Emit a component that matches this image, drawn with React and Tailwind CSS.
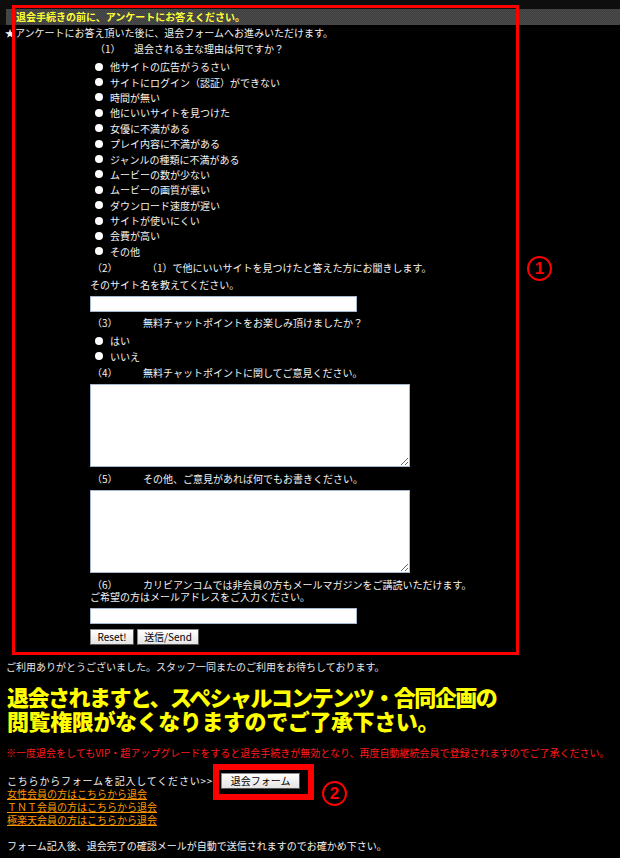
import React from 'react';

const riyu = [
  '他サイトの広告がうるさい',
  'サイトにログイン（認証）ができない',
  '時間が無い',
  '他にいいサイトを見つけた',
  '女優に不満がある',
  'プレイ内容に不満がある',
  'ジャンルの種類に不満がある',
  'ムービーの数が少ない',
  'ムービーの画質が悪い',
  'ダウンロード速度が遅い',
  'サイトが使いにくい',
  '会費が高い',
  'その他'
];

const links = [
  '女性会員の方はこちらから退会',
  'ＴＮＴ会員の方はこちらから退会',
  '極楽天会員の方はこちらから退会'
];

const font = 'font-["Noto_Sans_CJK_JP","Liberation_Sans",sans-serif]';

const Radio = ({ label }) => (
  <div className="flex items-center h-[15.4px]">
    <span className="w-[8px] h-[8px] rounded-full bg-white ml-[95px] mr-[7px]" />
    <span>{label}</span>
  </div>
);

const Pergunta = ({ num, left = 'pl-[92px]', gap = 'w-[51px]', children }) => (
  <div className={`flex items-center h-[12px] leading-[12px] ${left}`}>
    <span className={gap}>{num}</span>
    <span>{children}</span>
  </div>
);

const Botao = ({ children, w }) => (
  <button
    type="button"
    className={`h-[16px] ${w} border border-[#8a8a8a] border-b-[#555] border-r-[#555] bg-gradient-to-b from-[#ffffff] to-[#e4e4e4] text-[10px] leading-[14px] text-black`}
  >
    {children}
  </button>
);

const Circulo = ({ n, pos }) => (
  <div
    className={`absolute ${pos} w-[25px] h-[25px] rounded-full border-2 border-[#ff0000] flex items-center justify-center text-[#ff0000] text-[17px] font-bold leading-none font-["Liberation_Sans",sans-serif]`}
  >
    {n}
  </div>
);

const Desistencia = () => {
  return (
    <div className={`relative w-[620px] min-h-[858px] bg-black text-[#f2f2f2] text-[10px] ${font}`}>
      <div className="bg-[#0e0e0e] pt-[9px]">
        <div className="ml-[6px] h-[16px] leading-[16px] pl-[10px] font-bold text-[#ffff33] bg-[repeating-conic-gradient(#4b4b4b_0_25%,#3f3f3f_0_50%)] bg-[length:2px_2px]">
          退会手続きの前に、アンケートにお答えください。
        </div>
      </div>

      <div className="h-[12px] leading-[12px] mt-[2px] pl-[5px]">★アンケートにお答え頂いた後に、退会フォームへお進みいただけます。</div>

      <div className="mt-[4px]">
        <Pergunta num="（1）" left="pl-[95px]" gap="w-[39px]">退会される主な理由は何ですか？</Pergunta>
      </div>

      <div className="mt-[4px]">
        {riyu.map(r => (
          <Radio key={r} label={r} />
        ))}
      </div>

      <div className="mt-[3px]">
        <Pergunta num="（2）" gap="w-[55px]">（1）で他にいいサイトを見つけたと答えた方にお聞きします。</Pergunta>
      </div>
      <div className="mt-[5px] pl-[90px] h-[12px] leading-[12px]">そのサイト名を教えてください。</div>
      <div className="mt-[5px] pl-[90px]">
        <input type="text" className="block w-[267px] h-[16px] bg-white border border-[#a5b8d0]" />
      </div>

      <div className="mt-[5px]">
        <Pergunta num="（3）">無料チャットポイントをお楽しみ頂けましたか？</Pergunta>
      </div>
      <div className="mt-[4px]">
        <Radio label="はい" />
        <Radio label="いいえ" />
      </div>

      <div className="mt-[3px]">
        <Pergunta num="（4）">無料チャットポイントに関してご意見ください。</Pergunta>
      </div>
      <div className="mt-[5px] pl-[90px]">
        <textarea className="block w-[320px] h-[83px] bg-white border border-[#a5b8d0]" />
      </div>

      <div className="mt-[6px]">
        <Pergunta num="（5）">その他、ご意見があれば何でもお書きください。</Pergunta>
      </div>
      <div className="mt-[5px] pl-[90px]">
        <textarea className="block w-[320px] h-[83px] bg-white border border-[#a5b8d0]" />
      </div>

      <div className="mt-[6px]">
        <Pergunta num="（6）">カリビアンコムでは非会員の方もメールマガジンをご講読いただけます。</Pergunta>
        <div className="pl-[90px] h-[12px] leading-[12px]">ご希望の方はメールアドレスをご入力ください。</div>
      </div>
      <div className="mt-[5px] pl-[90px]">
        <input type="text" className="block w-[267px] h-[16px] bg-white border border-[#a5b8d0]" />
      </div>
      <div className="mt-[5px] pl-[90px] flex gap-[3px]">
        <Botao w="w-[44px]">Reset!</Botao>
        <Botao w="w-[62px]">送信/Send</Botao>
      </div>

      <div className="mt-[16px] pl-[6px] h-[12px] leading-[12px] text-[#e6e6e6]">
        ご利用ありがとうございました。スタッフ一同またのご利用をお待ちしております。
      </div>

      <div className="mt-[11px] pl-[7px] text-[22px] leading-[24px] font-black text-[#ffff00]">
        <div className="tracking-[-1.5px]">退会されますと、スペシャルコンテンツ・合同企画の</div>
        <div className="tracking-[-0.4px]">閲覧権限がなくなりますのでご了承下さい。</div>
      </div>

      <div className="mt-[15px] pl-[6px] h-[12px] leading-[12px] text-[#ff1a1a]">
        ※一度退会をしてもVIP・超アップグレードをすると退会手続きが無効となり、再度自動継続会員で登録されますのでご了承ください。
      </div>

      <div className="mt-[14px] pl-[7px] flex items-center h-[16px]">
        <span className="tracking-[0.8px]">こちらからフォームを記入してください&gt;&gt;</span>
        <span className="ml-[8px]">
          <Botao w="w-[79px]">退会フォーム</Botao>
        </span>
      </div>
      <div className="pl-[7px] leading-[13px] -mt-[2px]">
        {links.map(l => (
          <div key={l} className="h-[13px]">
            <a href="#" className="text-[#ff9900] underline">{l}</a>
          </div>
        ))}
      </div>

      <div className="mt-[14px] pl-[7px] h-[12px] leading-[12px]">
        フォーム記入後、退会完了の確認メールが自動で送信されますのでお確かめ下さい。
      </div>

      {/* marcações em vermelho por cima */}
      <div className="absolute left-[12px] top-[5px] w-[507px] h-[650px] border-[3px] border-[#ff0000] pointer-events-none" />
      <div className="absolute left-[213px] top-[764px] w-[101px] h-[36px] border-[6px] border-[#ff0000] pointer-events-none" />
      <Circulo n="1" pos="left-[527px] top-[256px]" />
      <Circulo n="2" pos="left-[322px] top-[781px]" />
    </div>
  );
};

export default Desistencia;
